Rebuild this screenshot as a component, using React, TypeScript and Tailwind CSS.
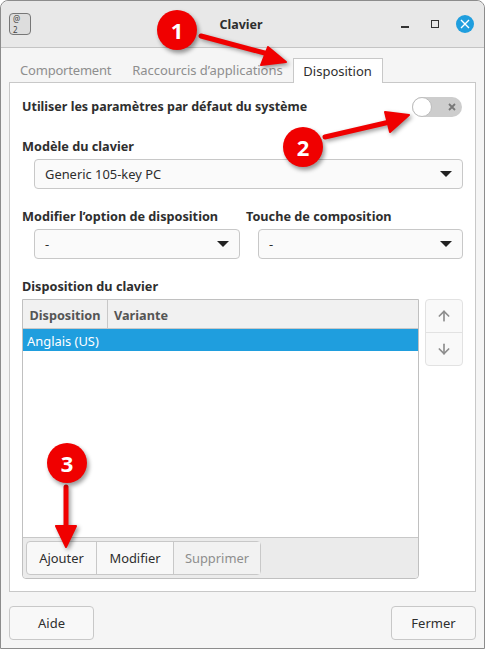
import { ArrowDown, ArrowUp } from 'lucide-react';

const Select = ({ value, className }: { value: string; className: string }) => (
  <div className={`flex h-[30px] items-center justify-between rounded-[4px] border border-[#c8c8c8] bg-[#fafafa] pl-[10px] pr-[10px] text-[#2e2e2e] ${className}`}>
    <span>{value}</span>
    <span className="h-0 w-0 border-x-[6px] border-t-[6px] border-x-transparent border-t-[#222222]" />
  </div>
);

const Badge = ({ n, className }: { n: string; className: string }) => (
  <div className={`absolute flex h-10 w-10 items-center justify-center rounded-full bg-[#f00000] text-[22px] font-bold text-white shadow-[2px_3px_4px_rgba(0,0,0,0.4)] ${className}`}>
    {n}
  </div>
);

const App = () => {
  return (
    <div className="relative h-[649px] w-[485px] overflow-hidden bg-white font-['Noto_Sans',sans-serif] text-[13px] leading-[18px]">
      <div className="flex h-full flex-col rounded-t-[8px] border border-[#8c8c8c] bg-[#f5f5f5]">
        {/* Title bar */}
        <div className="flex h-[47px] shrink-0 items-center justify-between rounded-t-[8px] border-b border-[#c4c4c4] bg-[#e8e8e8] pl-[8px] pr-[10px]">
          <div className="flex h-[22px] w-[22px] flex-col justify-center rounded-[4px] border border-[#777777] bg-[#dddddd] pl-[3px] text-[8px] leading-[11px] text-[#444444]">
            <span>@</span>
            <span>2</span>
          </div>
          <span className="ml-[50px] pt-[2px] text-[12.5px] font-bold text-[#2e2e2e]">Clavier</span>
          <div className="flex items-center">
            <span className="mt-[5px] h-[2px] w-[8px] bg-[#333333]" />
            <span className="ml-[22px] h-[8px] w-[8px] border-[1.5px] border-[#333333]" />
            <span className="ml-[17px] flex h-[18px] w-[18px] items-center justify-center rounded-full bg-[#1f9ede]">
              <svg width="10" height="10" viewBox="0 0 10 10" stroke="white" strokeWidth="1.4">
                <path d="M1 1l8 8M9 1l-8 8" />
              </svg>
            </span>
          </div>
        </div>

        {/* Tabs */}
        <div className="mt-[10px] flex h-[24px] items-center pl-[8px] text-[#8e8e8e]">
          <span className="ml-[11px] tracking-[-0.2px]">Comportement</span>
          <span className="ml-[21px] tracking-[-0.05px]">Raccourcis d’applications</span>
          <span className="relative z-10 ml-[10px] flex h-[25px] w-[90px] items-center justify-center border border-b-0 border-[#c8c8c8] bg-white text-[#2e2e2e]">
            Disposition
          </span>
        </div>

        {/* Notebook page */}
        <div className="mx-[8px] flex h-[510px] flex-col border border-[#c8c8c8] bg-white px-[12px] text-[12.9px]">
          <div className="mt-[14px] flex h-[20px] items-center justify-between pr-[1px]">
            <span className="text-[12.5px] font-bold text-[#2e2e2e]">Utiliser les paramètres par défaut du système</span>
            <div className="flex h-[20px] w-[50px] items-center justify-between rounded-full bg-[#cdcdcd] pr-[6px]">
              <span className="h-[20px] w-[20px] rounded-full border border-[#bdbdbd] bg-white" />
              <svg width="8" height="8" viewBox="0 0 8 8" stroke="#777777" strokeWidth="1.8">
                <path d="M1 1l6 6M7 1l-6 6" />
              </svg>
            </div>
          </div>

          <div className="mt-[20px] text-[12.7px] font-bold text-[#2e2e2e]">Modèle du clavier</div>
          <Select value="Generic 105-key PC" className="ml-[12px] mt-[4px]" />

          <div className="mt-[18px] grid grid-cols-[224px_1fr] text-[12.7px] font-bold text-[#2e2e2e]">
            <span>Modifier l’option de disposition</span>
            <span>Touche de composition</span>
          </div>
          <div className="mt-[4px] flex gap-[18px] pl-[12px]">
            <Select value="-" className="w-[206px]" />
            <Select value="-" className="w-[205px]" />
          </div>

          <div className="mt-[18px] text-[12.7px] font-bold text-[#2e2e2e]">Disposition du clavier</div>

          <div className="mt-[4px] flex gap-[6px]">
            <div className="flex h-[280px] w-[397px] flex-col rounded-b-[4px] border border-[#c0c0c0] bg-white">
              <div className="flex h-[29px] shrink-0 border-b border-[#c8c8c8] bg-[#f1f1f1] pt-[1px] text-[12.7px] font-bold text-[#555555]">
                <span className="-mt-[1px] flex w-[85px] items-center justify-center border-r border-[#c8c8c8] pt-[1px]">Disposition</span>
                <span className="flex items-center pl-[6px]">Variante</span>
              </div>
              <div className="flex h-[22px] shrink-0 items-center bg-[#1f9ede] pl-[4px] pt-[1px] text-white">Anglais (US)</div>
              <div className="flex-1" />
              <div className="flex h-[41px] shrink-0 items-start rounded-b-[4px] border-t border-[#c8c8c8] bg-[#ebebeb] px-[3px] pt-[3px]">
                <div className="flex h-[34px] rounded-[4px] border border-[#c8c8c8] bg-[#f8f8f8] text-[#2e2e2e]">
                  <span className="flex w-[70px] items-center justify-center border-r border-[#c8c8c8]">Ajouter</span>
                  <span className="flex w-[77px] items-center justify-center border-r border-[#c8c8c8]">Modifier</span>
                  <span className="flex w-[86px] items-center justify-center bg-[#f2f2f2] text-[#8e8e8e]">Supprimer</span>
                </div>
              </div>
            </div>

            <div className="flex h-[67px] w-[38px] flex-col rounded-[4px] border border-[#e2e2e2] bg-[#f9f9f9] text-[#8e8e8e]">
              <span className="flex flex-1 items-center justify-center border-b border-[#e2e2e2]">
                <ArrowUp size={16} strokeWidth={2.5} />
              </span>
              <span className="flex flex-1 items-center justify-center">
                <ArrowDown size={16} strokeWidth={2.5} />
              </span>
            </div>
          </div>
        </div>

        {/* Footer */}
        <div className="mt-[14px] flex justify-between pl-[8px] pr-[8px] text-[#2e2e2e]">
          <button className="flex h-[34px] w-[85px] items-center justify-center rounded-[4px] border border-[#c8c8c8] bg-[#f8f8f8]">Aide</button>
          <button className="flex h-[34px] w-[85px] items-center justify-center rounded-[4px] border border-[#c8c8c8] bg-[#f8f8f8]">Fermer</button>
        </div>
      </div>

      {/* Annotations */}
      <svg className="absolute left-0 top-0 drop-shadow-[2px_2px_2px_rgba(0,0,0,0.4)]" width="485" height="649" fill="#f00000" stroke="#f00000" strokeLinecap="round" strokeLinejoin="round">
        <path d="M201 36L272 55" strokeWidth="5" fill="none" />
        <path d="M286 62L268 47L261 65Z" strokeWidth="2" />
        <path d="M325 137L394 121" strokeWidth="5" fill="none" />
        <path d="M409 115L385 112L390 132Z" strokeWidth="2" />
        <path d="M66 487L66 530" strokeWidth="5" fill="none" />
        <path d="M66 547L56 526L76 526Z" strokeWidth="2" />
      </svg>
      <Badge n="1" className="left-[157px] top-[10px]" />
      <Badge n="2" className="left-[283px] top-[127px]" />
      <Badge n="3" className="left-[47px] top-[443px]" />
    </div>
  );
};

export default App;
